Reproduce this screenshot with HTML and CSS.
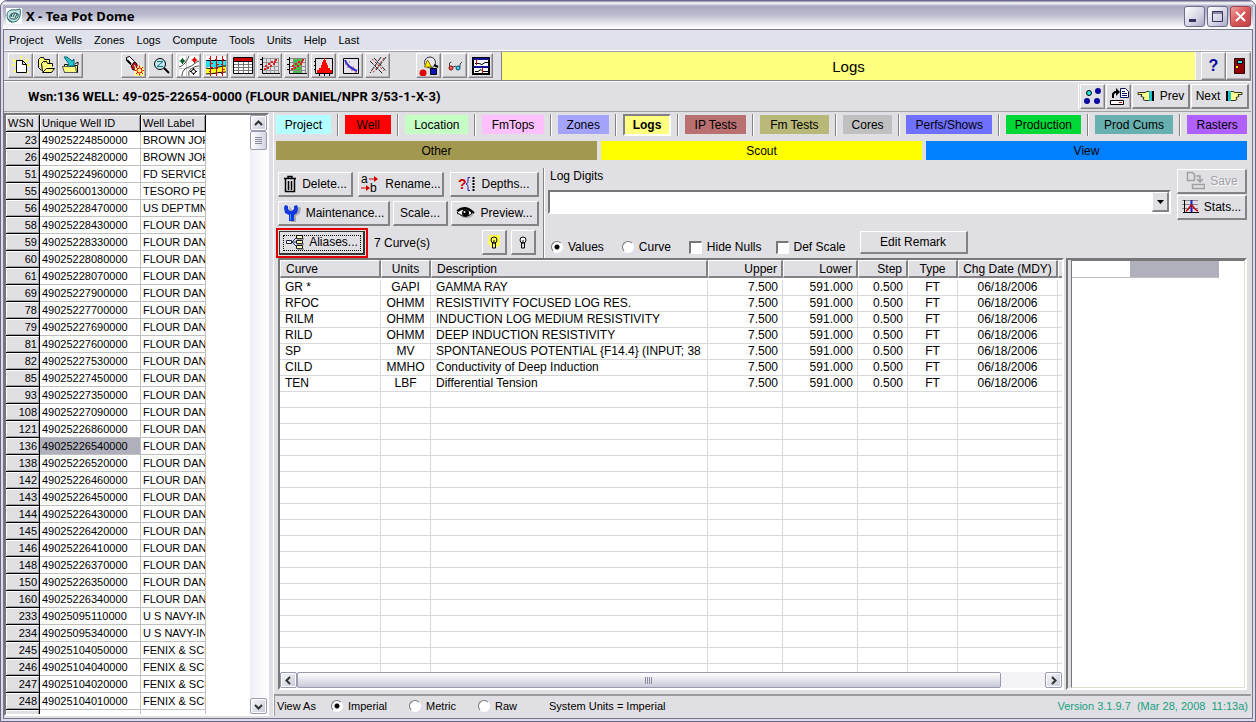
FILE: index.html
```
<!DOCTYPE html>
<html lang="en">
<head>
  <meta charset="UTF-8" />
  <meta name="viewport" content="width=device-width, initial-scale=1.0" />
  <title>X - Tea Pot Dome</title>
  <link rel="stylesheet" href="styles.css">
</head>
<body>
<div class="window">
  <header class="titlebar">
    <svg class="app-icon" width="16" height="16" viewBox="0 0 16 16">
      <rect width="16" height="16" fill="#fff"/>
      <path d="M1 7c0-4 4-6 9-5l4-1c1 5 0 12-6 13-5 1-7-3-7-7z" fill="#cfe5e2" stroke="#1d6a6c"/>
      <path d="M4 8c0-3 6-4 8-2 1 3-2 6-5 5-3 0-4-2-3-3M6 6l-1 3M9 5L7 9M11 6l-2 4M2 11l4 3" fill="none" stroke="#124f58"/>
    </svg>
    <h1>X - Tea Pot Dome</h1>
    <div class="win-buttons">
      <button class="win-btn" aria-label="Minimize"><svg width="19" height="19"><rect x="4" y="12" width="7" height="3" fill="#33335c"/></svg></button>
      <button class="win-btn" aria-label="Maximize"><svg width="19" height="19"><path d="M4.500 4.500h10v10h-10zM4 6h11" fill="none" stroke="#33335c"/></svg></button>
      <button class="win-btn close" aria-label="Close"><svg width="19" height="19"><path d="M5 5l9 9M14 5l-9 9" stroke="#fff" stroke-width="2"/></svg></button>
    </div>
  </header>

  <div class="client">
    <nav class="menubar">
      <button>Project</button><button>Wells</button><button>Zones</button><button>Logs</button><button>Compute</button><button>Tools</button><button>Units</button><button>Help</button><button>Last</button>
    </nav>

    <div class="toolbar">
      <div class="tools files">
        <button class="tool" aria-label="New"><svg viewBox="0 0 20 20"><path d="M2 3l3 3M17 3l-3 3M3 16l2-2M17 17l-2-2M10 0v3M1 9h3M16 9h3" stroke="#ffff60" stroke-width="2"/><path d="M5.500 4.500h6l4 4v8h-10zM11.500 4.500v4h4" fill="#fff" stroke="#000"/></svg></button>
        <button class="tool" aria-label="Open"><svg viewBox="0 0 20 20"><path d="M2.500 11.500v-8l2-2h3l1 2h5v4M2.500 11.500l3 3" fill="#ffff80" stroke="#000"/><path d="M6.500 15.500l-1-8 2-2h3l1 2h5v3" fill="#ffff80" stroke="#000"/><path d="M6.500 16.500l4-4h8l-3 4z" fill="#ffff80" stroke="#000"/></svg></button>
        <button class="tool" aria-label="Import"><svg viewBox="0 0 20 20"><path d="M3.500 8.500h3l1 1h9v7h-13z" fill="#ffff60" stroke="#000"/><path d="M1.500 10.500h13l1 6h-12z" fill="#ffff80" stroke="#555"/><path d="M3 1h3l5 4 2-2v7H6l2-2z" fill="#20c8d0" stroke="#086070"/><path d="M14 8l3-2v3" fill="#fff" stroke="#000"/></svg></button>
      </div>
      <div class="tools search">
        <button class="tool" aria-label="Find"><svg viewBox="0 0 20 20"><path d="M2.500 1.500l3-1 5 5-3 4-5-5z" fill="#fff" stroke="#000"/><path d="M3 4l4 4" stroke="#000" stroke-width="2"/><path d="M7 10l4-4 2 2v5l-4 1z" fill="#c01818" stroke="#300"/><path d="M10 9l2 3" fill="none" stroke="#fff"/><path d="M11 12l5-3 4 3v8H10z" fill="#ffff90"/><circle cx="15.500" cy="14.500" r="2.500" fill="none" stroke="#e00000"/><path d="M15.500 9.500v2M15.500 17.500v2M10.500 14.500h2M18.500 14.500h2M12 11l2 2M17 16l2 2M19 11l-2 2M12 18l2-2" stroke="#e00000"/></svg></button>
        <button class="tool" aria-label="Zoom"><svg viewBox="0 0 20 20"><circle cx="9" cy="8" r="5.500" fill="#c4eaee" stroke="#000"/><path d="M6 5.500h6l-6 5h6" fill="none" stroke="#187080"/><path d="M13 12l5 5" stroke="#000" stroke-width="2"/></svg></button>
      </div>
      <div class="tools views">
        <button class="tool" aria-label="Map"><svg viewBox="0 0 20 20"><path fill="#fff" d="M0 0h20v20H0z"/><path d="M7.500 0v20M0 12.500h20" stroke="#ccc"/><path d="M0 11c3-1 4-2 6-4s3-5 4-7M3 20c0-5 3-8 7-9s6-5 10-6M10 20c0-2-1-4 1-6s5-4 9-4" stroke="#444" fill="none"/><path d="M3.500 2v6M.5 5h6" stroke="#086020"/><path d="M15.500 1v6M12.500 4h6" stroke="#e00000"/><circle cx="3.500" cy="5" r="2" fill="#086020"/><circle cx="15.500" cy="4" r="2" fill="#e00000"/><path d="M14.500 12v7M11 15.500h7" stroke="#000"/><circle cx="14.500" cy="15.500" r="2" fill="#fff" stroke="#000"/></svg></button>
        <button class="tool" aria-label="Cross section"><svg viewBox="0 0 20 20"><path fill="#fff" d="M0 0h20v20H0z"/><path fill="#20e0f0" d="M0 4h20v7H0z"/><path fill="#ffff20" d="M0 12c8 2 12-2 20-2v6c-7 0-12 2-20 2z"/><path d="M0 4.500h20M0 12c8 2 12-2 20-2M0 18c8 0 13-2 20-2" stroke="#000" fill="none"/><path d="M4.500 0v20M10.500 0v20M16.500 0v20" stroke="#e00000"/><path d="M3 2.500h2M5 7.500h2M4 11.500h3M3 15.500h2M9 3.500h2M10 8.500h3M10 12.500h2M9 17.500h2M16 3.500h2M15 8.500h2M16 13.500h3M15 17.500h2" stroke="#e00000"/></svg></button>
        <button class="tool" aria-label="Spreadsheet"><svg viewBox="0 0 20 20"><path fill="#fff" stroke="#000" d="M.5 1.500h19v16H.5z"/><path fill="#d00000" d="M1 2h18v3H1z"/><path d="M0 5.500h20" stroke="#000"/><path d="M1 8.500h18M1 11.500h18M1 14.500h18M5.500 6v11M10.500 6v11M15.500 6v11" stroke="#777"/></svg></button>
        <button class="tool" aria-label="Crossplot"><svg viewBox="0 0 20 20"><path d="M2 2.500h17M2 6.500h17M2 10.500h17M2 14.500h17M6.500 2v15M10.500 2v15M14.500 2v15M18.500 2v15" stroke="#999"/><path d="M2.500 1v16.500H20M0 3.500h2M0 8.500h2M0 13.500h2" fill="none" stroke="#000"/><path d="M4 13h2M5 10h2M7 12h2M8 8h2M10 10h2M11 6h2M13 8h2M15 4h2M14 6h2" stroke="#e02020" stroke-width="2"/></svg></button>
        <button class="tool" aria-label="Zone crossplot"><svg viewBox="0 0 20 20"><path fill="#30d030" d="M7 2h8v15H7z"/><path d="M2 2.500h17M2 6.500h17M2 10.500h17M2 14.500h17M6.500 2v15M10.500 2v15M14.500 2v15M18.500 2v15" stroke="#888"/><path d="M2.500 1v16.500H20M0 3.500h2M0 8.500h2M0 13.500h2" fill="none" stroke="#000"/><path d="M4 13h2M5 10h2M7 12h2M8 8h2M10 10h2M11 6h2M13 8h2M15 4h2M14 6h2" stroke="#e02020" stroke-width="2"/></svg></button>
        <button class="tool" aria-label="Histogram"><svg viewBox="0 0 20 20"><path d="M1.500 2.500h17v15h-17zM0 5.500h2M0 9.500h2M0 13.500h2M5.500 18v2M10.500 18v2M15.500 18v2" fill="none" stroke="#000"/><path fill="#f00" d="M3 17v-3h2v-2h2V9h1V6h1V4h1V2h1v2h1v3h1v2h1v3h2v2h2v3z"/></svg></button>
        <button class="tool" aria-label="Curve plot"><svg viewBox="0 0 20 20"><path d="M2.500 2.500h15v15h-15z" fill="#e8e4ee" stroke="#000"/><path d="M4 4c2 6 6 8 12 11" fill="none" stroke="#3030d0" stroke-width="2"/><path d="M4 8h1M6 11h2M10 14h2M8 6h1M12 11h1M14 16h2" stroke="#c03060"/></svg></button>
        <button class="tool" aria-label="Lines"><svg viewBox="0 0 20 20"><path d="M2 5l13 13M6 2l12 13M18 1L8 14M13 1L2 17" stroke="#222" stroke-dasharray="5 1"/><path d="M4 3l12 12M16 2L4 18" stroke="#d02020" stroke-dasharray="2 2"/></svg></button>
      </div>
      <div class="tools extras">
        <button class="tool" aria-label="Query shapes"><svg viewBox="0 0 20 20"><circle cx="11" cy="6.500" r="5.500" fill="#e8e8ec" stroke="#333"/><path d="M8.500 4l4 7h-7z" fill="#ffee00" stroke="#807000"/><path d="M15 9l4 2" stroke="#000" stroke-width="2"/><circle cx="4" cy="17" r="3.500" fill="#e00000"/><path fill="#1010c0" stroke="#000" d="M11.500 12.500h6v6h-6z"/></svg></button>
        <button class="tool" aria-label="View glasses"><svg viewBox="0 0 20 20"><circle cx="6" cy="12" r="2" fill="#f66" stroke="#800"/><circle cx="13" cy="12" r="2" fill="#4de" stroke="#046"/><path d="M4.500 10V7l2-1M8 11l3-1M15 11V8l2-2" fill="none" stroke="#444"/></svg></button>
        <button class="tool" aria-label="Report"><svg viewBox="0 0 20 20"><path fill="#fff" stroke="#000" stroke-width="2" d="M2 2h16v16H2z"/><path d="M2 3h16M2 11h16" stroke="#101090" stroke-width="2"/><path d="M4 7.500h4l3 1 3-2h3M4 15.500h3l3-2 2 2h5" stroke="#000" fill="none"/><path d="M5.500 4v5M11.500 12v5" stroke="#c00000"/></svg></button>
      </div>
      <div class="banner">Logs</div>
      <div class="tools quit">
        <button class="tool help" aria-label="Help">?</button>
        <button class="tool" aria-label="Exit"><svg viewBox="0 0 20 20"><path fill="#900000" stroke="#300" d="M5.500 2.500h10v15h-10z"/><path fill="#40e0f0" stroke="#000" d="M8.500 4.500h5v3h-5z"/><path fill="#ff0" d="M7 10h2v2H7z"/></svg></button>
      </div>
    </div>

    <div class="wellbar">
      <strong>Wsn:136 WELL: 49-025-22654-0000 (FLOUR DANIEL/NPR 3/53-1-X-3)</strong>
      <div class="well-nav">
        <button class="tool" aria-label="Well symbols"><svg viewBox="0 0 20 20"><circle cx="6" cy="6" r="2.500" fill="#20e8f0" stroke="#000"/><circle cx="15" cy="4" r="3" fill="#0808a0"/><circle cx="4" cy="14" r="3" fill="#0808a0"/><circle cx="14" cy="14" r="3" fill="#0808a0"/></svg></button>
        <button class="tool" aria-label="Send to"><svg viewBox="0 0 20 20"><path d="M4 11V7l2-2h2" fill="none" stroke="#000" stroke-width="2"/><path d="M7 1l4 4-4 4z"/><path d="M11.500 1.500h5l3 3v6h-8zM13 4.500h3M13 6.500h5M13 8.500h5" fill="#fff" stroke="#101060"/><path fill="#fff" stroke="#000" d="M1.500 13.500h13v4h-13z"/><path d="M10 15.500h3" stroke="#c00000"/></svg></button>
        <button class="btn step"><svg width="18" height="14" viewBox="0 0 18 14"><path d="M1 3.500h7l2-1h3v9H8l-2-1 1-2-3-1 1-2H1z" fill="#ffff90" stroke="#332"/><path d="M12 2h3v10h-3z" fill="#20c0c8"/><path d="M15 2h2v10h-2z"/></svg>Prev</button>
        <button class="btn step">Next<svg width="18" height="14" viewBox="0 0 18 14"><path d="M17 3.500h-7l-2-1H5v9h5l2-1-1-2 3-1-1-2h4z" fill="#ffff90" stroke="#332"/><path d="M3 2h3v10H3z" fill="#20c0c8"/><path d="M1 2h2v10H1z"/></svg></button>
      </div>
    </div>

    <main class="main">
      <aside class="well-list">
        <div class="grid-area">
          <table class="wells">
            <colgroup><col class="c-wsn"><col class="c-id"><col class="c-label"></colgroup>
            <thead><tr><th>WSN</th><th>Unique Well ID</th><th>Well Label</th></tr></thead>
            <tbody>
              <tr><th>23</th><td>49025224850000</td><td>BROWN JOH</td></tr>
              <tr><th>26</th><td>49025224820000</td><td>BROWN JOH</td></tr>
              <tr><th>51</th><td>49025224960000</td><td>FD SERVICE</td></tr>
              <tr><th>55</th><td>49025600130000</td><td>TESORO PE</td></tr>
              <tr><th>56</th><td>49025228470000</td><td>US DEPTMN</td></tr>
              <tr><th>58</th><td>49025228430000</td><td>FLOUR DAN</td></tr>
              <tr><th>59</th><td>49025228330000</td><td>FLOUR DAN</td></tr>
              <tr><th>60</th><td>49025228080000</td><td>FLOUR DAN</td></tr>
              <tr><th>61</th><td>49025228070000</td><td>FLOUR DAN</td></tr>
              <tr><th>69</th><td>49025227900000</td><td>FLOUR DAN</td></tr>
              <tr><th>78</th><td>49025227700000</td><td>FLOUR DAN</td></tr>
              <tr><th>79</th><td>49025227690000</td><td>FLOUR DAN</td></tr>
              <tr><th>81</th><td>49025227600000</td><td>FLOUR DAN</td></tr>
              <tr><th>82</th><td>49025227530000</td><td>FLOUR DAN</td></tr>
              <tr><th>85</th><td>49025227450000</td><td>FLOUR DAN</td></tr>
              <tr><th>93</th><td>49025227350000</td><td>FLOUR DAN</td></tr>
              <tr><th>108</th><td>49025227090000</td><td>FLOUR DAN</td></tr>
              <tr><th>121</th><td>49025226860000</td><td>FLOUR DAN</td></tr>
              <tr class="selected"><th>136</th><td>49025226540000</td><td>FLOUR DAN</td></tr>
              <tr><th>138</th><td>49025226520000</td><td>FLOUR DAN</td></tr>
              <tr><th>142</th><td>49025226460000</td><td>FLOUR DAN</td></tr>
              <tr><th>143</th><td>49025226450000</td><td>FLOUR DAN</td></tr>
              <tr><th>144</th><td>49025226430000</td><td>FLOUR DAN</td></tr>
              <tr><th>145</th><td>49025226420000</td><td>FLOUR DAN</td></tr>
              <tr><th>146</th><td>49025226410000</td><td>FLOUR DAN</td></tr>
              <tr><th>148</th><td>49025226370000</td><td>FLOUR DAN</td></tr>
              <tr><th>150</th><td>49025226350000</td><td>FLOUR DAN</td></tr>
              <tr><th>160</th><td>49025226340000</td><td>FLOUR DAN</td></tr>
              <tr><th>233</th><td>49025095110000</td><td>U S NAVY-IN</td></tr>
              <tr><th>234</th><td>49025095340000</td><td>U S NAVY-IN</td></tr>
              <tr><th>245</th><td>49025104050000</td><td>FENIX &amp; SCIS</td></tr>
              <tr><th>246</th><td>49025104040000</td><td>FENIX &amp; SCIS</td></tr>
              <tr><th>247</th><td>49025104020000</td><td>FENIX &amp; SCIS</td></tr>
              <tr><th>248</th><td>49025104010000</td><td>FENIX &amp; SCIS</td></tr>
              <tr><th>249</th><td>49025104000000</td><td>FENIX &amp; SCIS</td></tr>
            </tbody>
          </table>
        </div>
        <div class="vscroll">
          <button class="sb" aria-label="Scroll up"><svg width="9" height="9"><path d="M1 6l3.500-3.500L8 6" fill="none" stroke="#333" stroke-width="2"/></svg></button>
          <div class="vthumb"><svg width="7" height="8"><path d="M0 .5h7M0 2.500h7M0 4.500h7M0 6.500h7" stroke="#8a8aa0"/></svg></div>
          <button class="sb last" aria-label="Scroll down"><svg width="9" height="9"><path d="M1 3l3.500 3.500L8 3" fill="none" stroke="#333" stroke-width="2"/></svg></button>
        </div>
      </aside>

      <section class="content">
        <nav class="tabs">
          <button class="t-project">Project</button><i></i>
          <button class="t-well">Well</button><i></i>
          <button class="t-location">Location</button><i></i>
          <button class="t-fmtops">FmTops</button><i></i>
          <button class="t-zones">Zones</button><i></i>
          <button class="t-logs">Logs</button><i></i>
          <button class="t-iptests">IP Tests</button><i></i>
          <button class="t-fmtests">Fm Tests</button><i></i>
          <button class="t-cores">Cores</button><i></i>
          <button class="t-perfs">Perfs/Shows</button><i></i>
          <button class="t-production">Production</button><i></i>
          <button class="t-cums">Prod Cums</button><i></i>
          <button class="t-rasters">Rasters</button>
        </nav>
        <nav class="subtabs">
          <button class="s-other">Other</button>
          <button class="s-scout">Scout</button>
          <button class="s-view">View</button>
        </nav>

        <div class="controls">
          <div class="actions">
            <div class="row">
              <button class="btn delete"><svg width="14" height="18" viewBox="0 0 14 18"><path d="M1 3.500h12M5 3V1.500h4V3M2.500 4v12.500h9V4M5.500 6v9M8.500 6v9" fill="none" stroke="#000" stroke-width="1.500"/></svg>Delete...</button>
              <button class="btn rename"><svg width="20" height="18" viewBox="0 0 20 18"><text x="1" y="8" class="glyph">a</text><text x="10" y="17" class="glyph">b</text><path d="M9 4h6M1 13h6" stroke="#d00000"/><path d="M14 1l4 3-4 3zM6 10l4 3-4 3z" fill="#d00000"/></svg>Rename...</button>
              <button class="btn depths"><svg width="18" height="16" viewBox="0 0 18 16"><text x="0" y="13" class="glyph red">?</text><path d="M12 1.500h-2v5l-2 1.500 2 1.500v5h2" fill="none" stroke="#2020c0"/><path d="M15.500 1v14" stroke="#000" stroke-width="2" stroke-dasharray="2 1"/></svg>Depths...</button>
            </div>
            <div class="row">
              <button class="btn maint"><svg width="18" height="18" viewBox="0 0 18 18"><path d="M6 2l3 4h3l2-4 4 2-1 5-4 3v6H8z" fill="#a8a8ac"/><path d="M2 1l3 1v3l2 2h2l2-2V2l3-1 1 4-1 4-3 2v6H6v-6L2 9 1 4z" fill="#1038e0"/><path d="M7.500 10v6" stroke="#20a0ff"/></svg>Maintenance...</button>
              <button class="btn scale">Scale...</button>
              <button class="btn preview"><svg width="19" height="14" viewBox="0 0 19 14"><path d="M4 9c4 5 12 4 14-2l-3-2z" fill="#a8a8ac"/><path d="M1 7c4-5 11-5 15 0-4 4-8 4-11 2z" fill="#fff" stroke="#000"/><path d="M1 5c5-4 11-4 17 2" fill="none" stroke="#000" stroke-width="2"/><circle cx="9.500" cy="7" r="3.500"/><circle cx="8.500" cy="6" r="1" fill="#fff"/></svg>Preview...</button>
            </div>
            <div class="row">
              <div class="highlight"><button class="btn aliases"><svg width="19" height="16" viewBox="0 0 19 16"><path d="M1.500 6.500h5v3h-5z" fill="#fff" stroke="#224"/><path d="M7 8h4M7 8l5-5M7 8l5 5" stroke="#223070"/><path d="M11.500 1.500h6v3h-6zM11.500 6.500h6v3h-6zM11.500 11.500h6v3h-6z" fill="#ffffc0" stroke="#111"/><path d="M12 5h7M12 10h7M12 15h7" stroke="#555"/></svg>Aliases...</button></div>
              <span class="count">7 Curve(s)</span>
              <button class="btn bulb" aria-label="Show all"><svg width="18" height="18" viewBox="0 0 18 18"><path d="M4 2h11v10l-3 2H6l-3-4z" fill="#ffff50"/><circle cx="9" cy="7" r="3" fill="#ffff60" stroke="#000"/><path d="M9 7v4M7.500 10v5h3v-5" fill="none" stroke="#000"/></svg></button>
              <button class="btn bulb" aria-label="Hide all"><svg width="18" height="18" viewBox="0 0 18 18"><circle cx="9" cy="7" r="3" fill="#fff" stroke="#000"/><path d="M9 7v4M7.500 10v5h3v-5" fill="none" stroke="#000"/></svg></button>
            </div>
          </div>

          <div class="digits">
            <label for="digits">Log Digits</label>
            <div class="combo">
              <select id="digits"><option></option></select>
              <span class="arrow"><svg width="7" height="4"><path d="M0 0h7L3.500 4z"/></svg></span>
            </div>
            <div class="options">
              <label><input type="radio" name="mode" checked>Values</label>
              <label><input type="radio" name="mode">Curve</label>
              <label><input type="checkbox">Hide Nulls</label>
              <label><input type="checkbox">Def Scale</label>
              <button class="btn remark">Edit Remark</button>
            </div>
          </div>

          <div class="side">
            <button class="btn save" disabled><svg width="20" height="20" viewBox="0 0 20 20"><path d="M2.500 1.500h5l2 2v6h-7zM7.500 13.500h12v4h-12zM11 5h4v5M12 8l3 3 3-3" fill="none" stroke="#a0a0a4" stroke-width="1.500"/></svg>Save</button>
            <button class="btn stats"><svg width="17" height="16" viewBox="0 0 17 16"><path d="M0 1.500h16M0 5.500h16M0 9.500h16" stroke="#888"/><path d="M2.500 1v13M1 13.500h16" stroke="#000"/><path d="M9.500 1v12" stroke="#2020c0" stroke-width="2"/><path d="M4 12c3-1 4-6 5.500-6S12 11 16 12" fill="none" stroke="#d00000" stroke-width="1.500"/></svg>Stats...</button>
          </div>
        </div>

        <div class="lists">
          <div class="curve-list">
            <table class="curves">
              <colgroup><col class="c-curve"><col class="c-50"><col><col class="c-75"><col class="c-75"><col class="c-50"><col class="c-50"><col class="c-date"><col class="c-end"></colgroup>
              <thead><tr><th>Curve</th><th class="mid">Units</th><th>Description</th><th class="num">Upper</th><th class="num">Lower</th><th class="num">Step</th><th class="mid">Type</th><th class="mid">Chg Date (MDY)</th><th></th></tr></thead>
              <tbody>
                <tr><td>GR *</td><td class="mid">GAPI</td><td>GAMMA RAY</td><td class="num">7.500</td><td class="num">591.000</td><td class="num">0.500</td><td class="mid">FT</td><td class="mid">06/18/2006</td><td></td></tr>
                <tr><td>RFOC</td><td class="mid">OHMM</td><td>RESISTIVITY FOCUSED LOG RES.</td><td class="num">7.500</td><td class="num">591.000</td><td class="num">0.500</td><td class="mid">FT</td><td class="mid">06/18/2006</td><td></td></tr>
                <tr><td>RILM</td><td class="mid">OHMM</td><td>INDUCTION LOG MEDIUM RESISTIVITY</td><td class="num">7.500</td><td class="num">591.000</td><td class="num">0.500</td><td class="mid">FT</td><td class="mid">06/18/2006</td><td></td></tr>
                <tr><td>RILD</td><td class="mid">OHMM</td><td>DEEP INDUCTION RESISTIVITY</td><td class="num">7.500</td><td class="num">591.000</td><td class="num">0.500</td><td class="mid">FT</td><td class="mid">06/18/2006</td><td></td></tr>
                <tr><td>SP</td><td class="mid">MV</td><td>SPONTANEOUS POTENTIAL {F14.4} (INPUT; 38</td><td class="num">7.500</td><td class="num">591.000</td><td class="num">0.500</td><td class="mid">FT</td><td class="mid">06/18/2006</td><td></td></tr>
                <tr><td>CILD</td><td class="mid">MMHO</td><td>Conductivity of Deep Induction</td><td class="num">7.500</td><td class="num">591.000</td><td class="num">0.500</td><td class="mid">FT</td><td class="mid">06/18/2006</td><td></td></tr>
                <tr><td>TEN</td><td class="mid">LBF</td><td>Differential Tension</td><td class="num">7.500</td><td class="num">591.000</td><td class="num">0.500</td><td class="mid">FT</td><td class="mid">06/18/2006</td><td></td></tr>
                <tr class="filler"><td></td><td></td><td></td><td></td><td></td><td></td><td></td><td></td><td></td></tr>
              </tbody>
            </table>
            <div class="hscroll">
              <button class="sb" aria-label="Scroll left"><svg width="9" height="9"><path d="M6 1L2.500 4.500 6 8" fill="none" stroke="#333" stroke-width="2"/></svg></button>
              <div class="hthumb"><svg width="8" height="7"><path d="M.5 0v7M2.500 0v7M4.500 0v7M6.500 0v7" stroke="#8a8aa0"/></svg></div>
              <button class="sb last" aria-label="Scroll right"><svg width="9" height="9"><path d="M3 1l3.500 3.500L3 8" fill="none" stroke="#333" stroke-width="2"/></svg></button>
            </div>
          </div>
          <div class="values"><div class="values-grid"><div class="values-head"><span></span></div></div></div>
        </div>

        <footer class="status">
          <span class="view-as">View As</span>
          <label><input type="radio" name="units" checked>Imperial</label>
          <label><input type="radio" name="units">Metric</label>
          <label><input type="radio" name="units">Raw</label>
          <span class="system">System Units = Imperial</span>
          <span class="version">Version 3.1.9.7&nbsp; (Mar 28, 2008&nbsp; 11:13a)</span>
        </footer>
      </section>
    </main>
  </div>
</div>
</body>
</html>
```
FILE: styles.css
```
* {
  box-sizing: border-box;
}
body {
  margin: 0;
  font-family: "Liberation Sans", Arial, sans-serif;
  font-size: 12px;
  line-height: 14px;
  color: #000;
  background: #fff;
}
button, select, input {
  font: inherit;
  color: inherit;
  margin: 0;
}
button {
  border: 0;
  padding: 0;
  background: none;
  white-space: nowrap;
}
svg {
  display: block;
  flex: none;
}

/* window frame */
.window {
  display: flex;
  flex-direction: column;
  height: 100vh;
  min-height: 480px;
  border: 1px solid #6a6788;
  border-radius: 7px 7px 0 0;
  padding: 0 2px 2px;
  background: #dcdbe6;
  overflow: hidden;
}
.titlebar {
  display: flex;
  align-items: center;
  flex: none;
  height: 28px;
  padding: 2px 2px 0 3px;
  background: linear-gradient(#8c89a8 0, #fff 2px, #a9a8c0 5px, #bcbccf 14px, #f4f4f8 25px, #fff 28px);
}
.titlebar h1 {
  flex: 1;
  margin: 0 0 0 4px;
  font-family: "Noto Sans", sans-serif;
  font-size: 13px;
  line-height: 18px;
}
.win-buttons {
  display: flex;
  gap: 2px;
}
.win-btn {
  width: 21px;
  height: 21px;
  border: 1px solid #6c6c90;
  border-radius: 3px;
  background: linear-gradient(135deg, #fff, #d4d4e4 60%, #a8a8c4);
}
.win-btn.close {
  border-color: #a04048;
  background: linear-gradient(135deg, #f0a0a0, #d85858 50%, #c04048);
}
.client {
  display: flex;
  flex-direction: column;
  flex: 1;
  min-height: 0;
  padding: 0 1px 2px 0;
  border: 1px solid #77758f;
  background: #e0dfe3;
}

.menubar {
  display: flex;
  flex: none;
  gap: 12px;
  height: 20px;
  padding: 0 5px;
  background: #dfe2ea;
  font-size: 11px;
}

/* toolbar */
.toolbar {
  display: flex;
  align-items: stretch;
  flex: none;
  height: 31px;
  padding-left: 4px;
  border-top: 1px solid #fff;
  border-bottom: 1px solid #848284;
  box-shadow: inset 0 1px #a0a0a8;
}
.tools {
  display: flex;
  align-items: center;
  gap: 2px;
}
.files {
  gap: 0;
}
.search {
  margin-left: 38px;
}
.views {
  margin-left: 3px;
}
.extras {
  gap: 1px;
  margin-left: 26px;
}
.tool {
  display: flex;
  align-items: center;
  justify-content: center;
  width: 25px;
  height: 25px;
  border: 1px solid;
  border-color: #fff #848284 #848284 #fff;
  box-shadow: inset -1px -1px #b4b2b8;
  background: #e0dfe3;
}
.tool svg {
  width: 20px;
  height: 20px;
}
.banner {
  flex: 1;
  margin: 1px 0 0 8px;
  border-left: 1px solid #848284;
  border-right: 1px solid #fff;
  background: #ffff80;
  text-align: center;
  font-size: 15px;
  line-height: 29px;
}
.quit {
  gap: 0;
  margin-left: 5px;
}
.quit .tool {
  height: 28px;
}
.quit .help {
  color: #0808a0;
  font-weight: bold;
  font-size: 16px;
}

.wellbar {
  display: flex;
  align-items: center;
  flex: none;
  height: 31px;
  padding: 0 2px 0 24px;
  border-top: 1px solid #fff;
  border-bottom: 1px solid #a0a0a4;
}
.wellbar strong {
  flex: 1;
  font-family: Roboto, sans-serif;
  font-size: 13px;
  line-height: 16px;
}
.well-nav {
  display: flex;
  gap: 1px;
  border-left: 1px solid #fff;
  padding-left: 1px;
}
.btn {
  display: flex;
  align-items: center;
  justify-content: center;
  gap: 5px;
  height: 25px;
  border: solid;
  border-width: 1px 2px 2px 1px;
  border-color: #fff #848284 #848284 #fff;
  background: #e0dfe3;
}
.btn.step {
  width: 58px;
}

/* left list */
.main {
  display: flex;
  flex: 1;
  gap: 4px;
  min-height: 0;
}
.well-list {
  display: flex;
  flex: none;
  width: 265px;
  margin: 1px 0 0;
  border: 2px solid;
  border-color: #77777a #fff #fff #77777a;
  background: #fff;
}
.grid-area {
  flex: 1;
  overflow: hidden;
}
table {
  border-collapse: separate;
  border-spacing: 0;
  table-layout: fixed;
}
th {
  font-weight: normal;
}
.wells {
  width: 200px;
  font-size: 11px;
}
.c-wsn {
  width: 34px;
}
.c-id {
  width: 101px;
}
.wells th, .wells td {
  height: 17px;
  padding: 0 2px;
  line-height: 15px;
  overflow: hidden;
  white-space: nowrap;
  text-align: left;
}
.wells td {
  border-right: 1px solid #c0c0c0;
  border-bottom: 1px solid #c0c0c0;
}
.wells th {
  border-right: 1px solid #000;
  border-bottom: 1px solid #000;
  background: #e0dfe3;
  box-shadow: inset 1px 1px #fff, inset -1px -1px #a0a0a4;
}
.wells tbody th {
  text-align: right;
}
.wells .selected td:nth-child(2) {
  background: #b0b0bc;
}
.sb {
  display: flex;
  align-items: center;
  justify-content: center;
  flex: none;
  width: 17px;
  height: 16px;
  border: 1px solid #9a9ab0;
  border-radius: 2px;
  box-shadow: inset 0 0 0 1px #fff;
  background: linear-gradient(135deg, #f8f8fc, #c8c8d8);
}
.vscroll {
  display: flex;
  flex-direction: column;
  width: 17px;
  background: linear-gradient(90deg, #eeeef6, #fff);
}
.vthumb {
  display: flex;
  align-items: center;
  justify-content: center;
  height: 19px;
  border: 1px solid #9a9ab0;
  border-radius: 2px;
  background: linear-gradient(90deg, #fff, #d4d4e2);
}
.vscroll .last {
  margin-top: auto;
}

/* right side */
.content {
  display: flex;
  flex-direction: column;
  flex: 1;
  min-width: 0;
  border-left: 1px solid #fff;
}
.tabs {
  display: grid;
  grid-template-columns: 55fr 2px 47fr 2px 63fr 2px 62fr 2px 51fr 2px 49fr 2px 61fr 2px 69fr 2px 50fr 2px 86fr 2px 75fr 2px 79fr 2px 60fr;
  column-gap: 6px;
  align-items: center;
  height: 25px;
  padding: 0 4px 0 2px;
}
.tabs i {
  height: 22px;
  border-left: 1px solid #848284;
  border-right: 1px solid #fff;
}
.tabs button {
  height: 19px;
}
.t-project { background: #b4ffff; }
.t-well { background: #f00; }
.t-location { background: #c4ffc4; }
.t-fmtops { background: #ffc0ff; }
.t-zones { background: #a4a4ff; }
.t-iptests { background: #b87070; }
.t-fmtests { background: #b8b878; }
.t-cores { background: #c0c0c0; }
.t-perfs { background: #7070ff; }
.t-production { background: #00d838; }
.t-cums { background: #68b0b0; }
.t-rasters { background: #b060ff; }
.tabs .t-logs {
  height: 22px;
  border: 2px solid;
  border-color: #848284 #fff #fff #848284;
  background: #ffff80;
  font-weight: bold;
}
.subtabs {
  display: grid;
  grid-template-columns: repeat(3, 1fr);
  gap: 4px;
  margin-top: 4px;
  padding: 0 4px 0 2px;
}
.subtabs button {
  height: 19px;
}
.s-other { background: #a39850; }
.s-scout { background: #ff0; }
.s-view { background: #0080ff; }

.controls {
  display: flex;
  flex: none;
  height: 98px;
  padding: 8px 4px 0 2px;
}
.actions {
  display: flex;
  flex-direction: column;
  gap: 4px;
  width: 268px;
  padding-top: 4px;
  border-right: 1px solid #848284;
}
.row {
  display: flex;
  align-items: center;
  gap: 3px;
  height: 25px;
  padding-left: 2px;
}
.delete { width: 75px; }
.rename { width: 86px; margin-left: 2px; }
.depths { width: 89px; margin-left: 3px; }
.maint { width: 112px; }
.scale { width: 55px; }
.preview { width: 88px; }
.row:last-child {
  gap: 4px;
  padding-left: 0;
}
.highlight {
  padding: 1px;
  border: 2px solid #e00000;
}
.aliases {
  width: 86px;
  height: 24px;
  border-color: #333;
  outline: 1px dotted #000;
  outline-offset: -5px;
}
.count {
  flex: 1;
  padding-left: 2px;
}
.bulb {
  width: 25px;
}
.row:last-child .bulb:last-child {
  margin-right: 7px;
}
.glyph {
  font-size: 12px;
}
.glyph.red {
  fill: #d00000;
  font-size: 14px;
  font-weight: bold;
}
.digits {
  flex: 1;
  min-width: 0;
  padding: 0 6px 0 3px;
  border-left: 1px solid #fff;
}
.digits > label {
  display: block;
  padding-left: 2px;
  line-height: 16px;
}
.combo {
  display: flex;
  height: 24px;
  margin-top: 6px;
  border: 2px solid;
  border-color: #77777a #fff #fff #77777a;
  background: #fff;
}
.combo select {
  appearance: none;
  flex: 1;
  border: 0;
  background: #fff;
}
.arrow {
  display: flex;
  align-items: center;
  justify-content: center;
  width: 17px;
  border: solid;
  border-width: 1px 2px 2px 1px;
  border-color: #fff #848284 #848284 #fff;
  background: #e0dfe3;
}
.options {
  display: flex;
  align-items: flex-end;
  margin-top: 17px;
  padding-left: 3px;
}
.options label, .status label {
  display: flex;
  align-items: center;
  gap: 5px;
  margin-right: 18px;
  white-space: nowrap;
}
.options label:nth-child(n+3) {
  margin-right: 14px;
}
.options .remark {
  width: 108px;
  height: 23px;
}
input[type="radio"], input[type="checkbox"] {
  appearance: none;
  flex: none;
  width: 12px;
  height: 12px;
  border: 1px solid;
  border-color: #77777a #fff #fff #77777a;
  background: #fff;
}
input[type="checkbox"] {
  width: 13px;
  height: 13px;
  border-width: 2px 1px 1px 2px;
}
input[type="radio"] {
  border-radius: 50%;
}
input[type="radio"]:checked {
  background: radial-gradient(#000 0 2px, #fff 3px);
}
.side {
  display: flex;
  flex-direction: column;
  gap: 1px;
  width: 70px;
  margin-top: 1px;
}
.save {
  color: #a0a0a4;
  text-shadow: 1px 1px #fff;
}

/* curve table */
.lists {
  display: flex;
  flex: 1;
  gap: 2px;
  min-height: 0;
  padding: 0 4px;
}
.curve-list {
  display: flex;
  flex-direction: column;
  flex: 1;
  min-width: 0;
  border: 2px solid;
  border-color: #77777a #fff #fff #77777a;
  background: #fff;
}
.curves {
  width: 100%;
  flex: 1;
}
.c-curve { width: 101px; }
.c-50 { width: 50px; }
.c-75 { width: 75px; }
.c-date { width: 100px; }
.c-end { width: 4px; }
.curves th {
  height: 18px;
  padding: 0 5px;
  border: solid;
  border-width: 1px 2px 2px 1px;
  border-color: #fff #848284 #848284 #fff;
  background: #e0dfe3;
  text-align: left;
  white-space: nowrap;
  overflow: hidden;
}
.curves tbody::before {
  content: "";
  display: table-row;
  height: 2px;
}
.curves td {
  height: 16px;
  padding: 0 4px 0 5px;
  border-right: 1px solid #d8d8dc;
  border-bottom: 1px solid #d8d8dc;
  line-height: 15px;
  white-space: nowrap;
  overflow: hidden;
}
.curves .num {
  padding-right: 4px;
  text-align: right;
}
.curves .mid {
  padding: 0;
  text-align: center;
}
.curves th:last-child, .curves td:last-child {
  padding: 0;
  border-right: 0;
}
.curves .filler td {
  height: auto;
  border-bottom: 0;
  background: repeating-linear-gradient(#fff 0 15px, #d8d8dc 15px 16px);
}
.hscroll {
  display: flex;
  background: #f4f4f8;
}
.hthumb {
  display: flex;
  align-items: center;
  justify-content: center;
  width: 90%;
  border: 1px solid #9a9ab0;
  border-radius: 2px;
  background: linear-gradient(#fff, #c8c8d8);
}
.hscroll .last {
  margin-left: auto;
}
.values {
  width: 181px;
  padding: 0 0 0 3px;
  border: 2px solid;
  border-color: #77777a #fff #fff #77777a;
}
.values-grid {
  height: 100%;
  border: 1px solid;
  border-color: #77777a #e0dfd0 #e0dfd0 #77777a;
  background: #fff;
}
.values-head {
  display: flex;
  width: 147px;
  border-bottom: 1px solid #c0c0c0;
}
.values-head span {
  width: 89px;
  height: 16px;
  margin-left: auto;
  background: #b0b0bc;
}
.status {
  display: flex;
  align-items: center;
  flex: none;
  height: 22px;
  margin-top: 4px;
  padding: 0 3px 0 2px;
  border-top: 2px solid #9a9a9e;
  border-left: 1px solid #9a9a9e;
  font-size: 11px;
}
.status label {
  margin-right: 22px;
}
.view-as {
  margin-right: 15px;
}
.system {
  margin-left: 10px;
}
.version {
  margin-left: auto;
  color: #18a080;
}
```
